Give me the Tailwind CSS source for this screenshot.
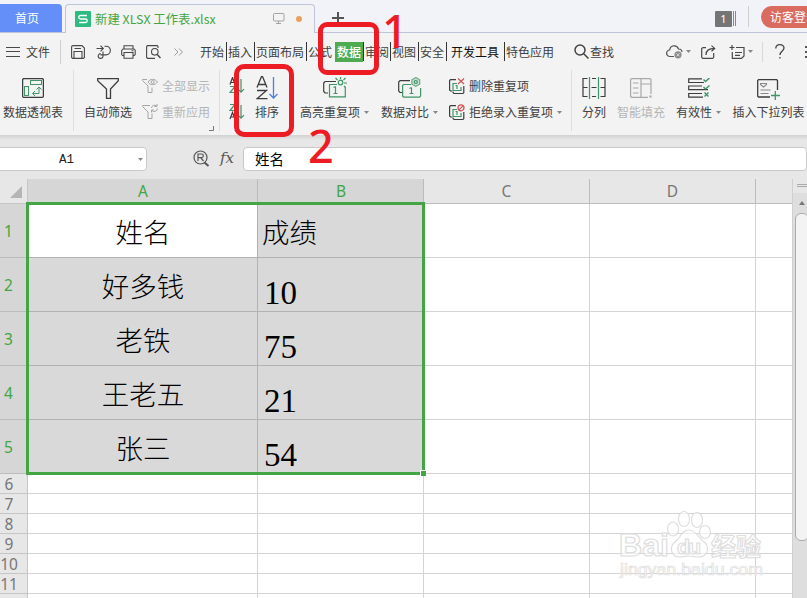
<!DOCTYPE html>
<html lang="zh-CN">
<head>
<meta charset="utf-8">
<title>新建 XLSX 工作表.xlsx</title>
<script src="https://cdn.jsdelivr.net/npm/@tailwindcss/browser@4"></script>
</head>
<body class="w-[807px] h-[598px] overflow-hidden relative bg-[#e7e7e7] text-[12px] leading-[16px] text-[#404040] font-['Noto_Sans_CJK_SC',sans-serif]">

<!-- tab strip -->
<header class="h-[33px] flex items-end bg-[#f1f3f8] border-b border-[#bcc6d8] whitespace-nowrap *:shrink-0">
  <div class="w-[62px] h-[28px] bg-[#648ff9] rounded-tr-[4px] text-white flex items-center pl-[15px] pb-px">首页</div>
  <div class="w-[250px] h-[29px] -mb-px ml-[3px] bg-[#f3f3f3] border border-b-0 border-[#bcc6d8] rounded-t-[4px] flex items-center *:shrink-0">
    <svg class="ml-[9px] w-4 h-4 shrink-0" viewBox="0 0 16 16"><rect width="16" height="16" rx="1" fill="#2dbb7f"/><path d="M12 4.500H5.500a1.700 1.700 0 0 0 0 3.500h5a1.700 1.700 0 0 1 0 3.500H4" fill="none" stroke="#fff" stroke-width="1.300"/></svg>
    <span class="ml-1 w-[125px] text-[#43a543] text-[12.400px]">新建 XLSX 工作表.xlsx</span>
    <svg class="ml-[53px] w-[12px] h-[12px]" viewBox="0 0 12 12" fill="none" stroke="#a3a3a3"><rect x=".5" y=".5" width="10.500" height="7.500" rx="1"/><path d="M5.500 8v2.500M3 10.500h5"/></svg>
    <span class="ml-[11px] w-[6px] h-[6px] rounded-full bg-[#e9a15f]"></span>
  </div>
  <svg class="ml-[17px] mb-[8px] w-[12px] h-[12px]" viewBox="0 0 12 12" stroke="#555" stroke-width="2"><path d="M6 0v12M0 6h12"/></svg>
  <span class="ml-[371px] mb-[5px] w-[17px] h-[16px] rounded-[1px] bg-[#757575] text-white text-[11px] leading-[16px] text-center font-['Noto_Sans',sans-serif]">1</span>
  <span class="ml-px mb-[6px] w-[3px] h-[15px] border-x border-[#888]"></span>
  <span class="ml-[12px] mb-[5px] w-px h-[21px] bg-[#cfcfcf]"></span>
  <span class="ml-[12px] mb-[4px] w-[80px] h-[22px] rounded-full bg-[#d96b5f] text-white pl-[9px] leading-[21px]">访客登录</span>
</header>

<!-- menu bar -->
<nav class="h-[37px] flex items-center bg-[#f3f3f3] whitespace-nowrap *:shrink-0">
  <svg class="ml-[6px] w-[14px] h-[10px]" viewBox="0 0 14 10" stroke="#484848"><path d="M0 .5h14M0 4.500h14M0 9.500h14"/></svg>
  <span class="ml-[6px] w-[24px]">文件</span>
  <span class="ml-[10px] w-px h-6 bg-[#cfcfcf]"></span>
  <svg class="ml-[10px] w-[14px] h-[14px]" viewBox="0 0 14 14" fill="none" stroke="#484848" stroke-width="1.100"><path d="M.6 2V12.400l1 1h10.800l1-1V3L11 .6H2A1.400 1.400 0 0 0 .6 2zM3 13V6.500h8V13M3.500 3.500H10"/></svg>
  <svg class="ml-[11px] w-[15px] h-[14px]" viewBox="0 0 15 14" fill="none" stroke="#484848" stroke-width="1.100"><path d="M.5 3.500h6.800M4.500.7l2.800 2.800L4.500 6.300M8.500 1.200H10a4.300 4.300 0 0 1 0 8.700H4.500M7 6.500V11a2.400 2.400 0 1 1-2.400-2.400"/></svg>
  <svg class="ml-[10px] w-[15px] h-[14px]" viewBox="0 0 15 14" fill="none" stroke="#484848" stroke-width="1.100"><path d="M3 4V.7h9V4M3 10.500H1.500L.7 9.500v-4L2 4h11l1.200 1.200v4.300l-.9 1H12M3 7.500h9v5.800H3zM10.500 5.800h2"/></svg>
  <svg class="ml-[10px] w-[15px] h-[14px]" viewBox="0 0 15 14" fill="none" stroke="#484848" stroke-width="1.100"><path d="M12 3V1.400L11.300.6H1.500L.6 1.500v11l1 .9H9"/><circle cx="8.800" cy="6.800" r="3.300"/><path d="M11.200 9.500l3.300 3.500" stroke-width="1.500"/></svg>
  <svg class="ml-[13px] w-[9px] h-[8px]" viewBox="0 0 9 8" fill="none" stroke="#999"><path d="M.5.5L4 4 .5 7.500M5 .5L8.500 4 5 7.500"/></svg>
  <span class="ml-[17px] w-[27px] leading-[19px] border-r border-[#333]">开始</span>
  <span class="ml-px w-[27px] leading-[19px] border-r border-[#333]">插入</span>
  <span class="ml-px w-[51px] leading-[19px] border-r border-[#333]">页面布局</span>
  <span class="ml-px w-[27px] leading-[19px]">公式</span>
  <span class="w-[28px] leading-[19px] h-[20px] pl-[2px] bg-[#4fab50] text-white font-medium">数据</span>
  <span class="w-[28px] pl-px leading-[19px] border-x border-[#333]">审阅</span>
  <span class="ml-px w-[27px] leading-[19px] border-r border-[#333]">视图</span>
  <span class="ml-px w-[27px] leading-[19px] border-r border-[#333]">安全</span>
  <span class="ml-1 w-[54px] leading-[19px] border-r border-[#333] text-[#111]">开发工具</span>
  <span class="ml-px w-[48px]">特色应用</span>
  <svg class="ml-[20px] w-[15px] h-[15px]" viewBox="0 0 15 15" fill="none" stroke="#444" stroke-width="1.500"><circle cx="6" cy="6" r="5"/><path d="M9.700 9.700l4.800 4.800"/></svg>
  <span class="ml-px w-[24px]">查找</span>
  <svg class="ml-[52px] w-[17px] h-[15px]" viewBox="0 0 17 15" fill="none" stroke="#555" stroke-width="1.200"><path d="M8 12.500H4A3.200 3.200 0 0 1 3.700 6 4.500 4.500 0 0 1 12.500 5a3.300 3.300 0 0 1 3.500 3"/><circle cx="12" cy="10.800" r="3.600" fill="#8b8b8b" stroke="none"/><path d="M10.500 9.300l3 3m0-3l-3 3" stroke="#eee" stroke-width=".8"/></svg>
  <svg class="ml-[3px] w-[5px] h-[3px]" viewBox="0 0 5 3" fill="#888"><path d="M0 0h5L2.500 3z"/></svg>
  <svg class="ml-[10px] w-[15px] h-[14px]" viewBox="0 0 15 14" fill="none" stroke="#484848" stroke-width="1.200"><path d="M5 2.600H2l-1.300 1v8.700l1 1h10l1-1V8M5 10c0-5 3-6.600 8.500-6.600M10.500.6l3.200 2.800-3.200 2.900"/></svg>
  <svg class="ml-[13px] w-[16px] h-[14px]" viewBox="0 0 16 14" fill="none" stroke="#484848" stroke-width="1.200"><path d="M3 0v5M.5 2.500h5M7 2.500h8v8.500l-2.500 2.400H3.300V7M6 7.500h7M6 10.300h5"/></svg>
  <svg class="ml-[3px] w-[5px] h-[3px]" viewBox="0 0 5 3" fill="#888"><path d="M0 0h5L2.500 3z"/></svg>
  <span class="ml-[9px] w-px h-[20px] bg-[#d8d8d8]"></span>
  <svg class="ml-[12px] w-[10px] h-[15px]" viewBox="0 0 10 15" fill="none" stroke="#444" stroke-width="1.300"><path d="M.8 4.500C.8-.5 9-.5 9 4c0 3.200-4.100 3.400-4.100 7M4.900 13v1.600"/></svg>
  <svg class="ml-[20px] w-[3px] h-[12px]" viewBox="0 0 3 12" fill="#555"><path d="M0 0h3v2H0zM0 5h3v2H0zM0 10h3v2H0z"/></svg>
</nav>

<!-- ribbon -->
<section class="h-[65px] flex items-start bg-[#f3f3f3] whitespace-nowrap *:shrink-0">
  <div class="w-[66px] pt-[8px] flex flex-col items-center">
    <svg class="w-[22px] h-[20px]" viewBox="0 0 22 20" fill="none" stroke="#3d3d3d"><rect x=".6" y=".6" width="20.800" height="18.800" rx="1.500" stroke-width="1.300"/><g stroke="#3f9567"><rect x="8.500" y="2.500" width="11" height="4"/><rect x="2.500" y="8.500" width="4" height="9"/><path d="M11 15.500h6v-6M13 13l-2.500 2.500L13 18M14.500 11.500L17 9l2.500 2.500"/></g></svg>
    <span class="mt-[6px]">数据透视表</span>
  </div>
  <span class="ml-[7px] w-px h-[61px] bg-[#dedede]"></span>
  <div class="ml-[6px] w-[56px] pt-[8px] flex flex-col items-center">
    <svg class="w-[22px] h-[21px]" viewBox="0 0 22 21" fill="none" stroke="#3d3d3d" stroke-width="1.300"><path d="M.7.7h20.600v2L13.500 11v9.300h-4V11L.7 2.700z"/></svg>
    <span class="mt-[5px]">自动筛选</span>
  </div>
  <div class="ml-[6px] w-[70px] pt-[7px] text-[#b5b5b5]">
    <div class="h-[18px] flex items-center"><svg class="w-4 h-4" viewBox="0 0 16 16" fill="none" stroke="#a5a5a5"><path d="M5 1.500H.5v1L6 8v6.500h4V9.500"/><path d="M6 4c2-3.500 7-3.500 9.500 0-2.500 3.500-7.500 3.500-9.500 0z"/><circle cx="10.700" cy="4" r="1.500"/></svg><span class="ml-1">全部显示</span></div>
    <div class="mt-[8px] h-[18px] flex items-center"><svg class="w-4 h-4" viewBox="0 0 16 16" fill="none" stroke="#a5a5a5"><path d="M8 1.500H.5v1L6 8v6.500h4V9.500"/><path d="M9.500 4a3 3 0 0 1 5-2M15 0v2.500h-2.500M15.300 4.500a3 3 0 0 1-5.300 2M9.500 8.500V6H12"/></svg><span class="ml-1">重新应用</span></div>
    <svg class="ml-[67px] mt-[5px] w-[5px] h-[5px]" viewBox="0 0 5 5" fill="none" stroke="#777"><path d="M0 4.500h4.500V0"/></svg>
  </div>
  <span class="ml-[7px] w-px h-[61px] bg-[#dedede]"></span>
  <div class="ml-[9px] w-[16px] pt-[7px]">
    <svg class="w-4 h-[17px]" viewBox="0 0 16 17" fill="none" stroke="#3d3d3d" stroke-width="1.200"><path d="M1 7.500L3.500.5 6 7.500M2 5.500h3"/><path stroke="#3f9567" d="M1 9.500h5l-5 6h5M12 2v13M9 12.200l3 3 3-3"/></svg>
    <svg class="mt-[9px] w-4 h-[17px]" viewBox="0 0 16 17" fill="none" stroke="#3d3d3d" stroke-width="1.200"><path d="M1 16L3.500 9.500 6 16M2 14h3"/><path stroke="#3f9567" d="M1 1.500h5l-5 6h5M12 2v13M9 12.200l3 3 3-3"/></svg>
  </div>
  <div class="ml-[7px] w-[30px] pt-[6px] flex flex-col items-center">
    <svg class="w-[22px] h-[24px]" viewBox="0 0 22 24" fill="none" stroke="#3d3d3d" stroke-width="1.300"><path d="M1 11.500L5.500.5h1L11 11.500M2.500 8.500h7M1 14.500h9.500L1 22.700h10.500"/><path stroke="#4f80d8" d="M17.500 1v20.500M13.500 18l4 4 4-4"/></svg>
    <span class="mt-[4px]">排序</span>
  </div>
  <div class="ml-[18px] w-[69px] pt-[7px] flex flex-col items-center">
    <svg class="w-[24px] h-[21px]" viewBox="0 0 24 21" fill="none" stroke="#3f9567" stroke-width="1.200"><path d="M13 4.500H2L.7 6v8.500L2 16h3" stroke="#3d3d3d"/><path d="M14 7.500H6.500v12.300h15.800V10M12.500 9.500v7M10.500 10.500l2-1M10.500 16.500h4"/><circle cx="17.500" cy="5.500" r="2.300"/><path d="M17.500 0v2M12.500 1l2 2M22.500 1l-2 2M21 6h3M21 9l1.500 1.500"/></svg>
    <span class="mt-[6px] flex items-center gap-[4px]">高亮重复项<svg class="w-[5px] h-[3px]" viewBox="0 0 5 3" fill="#888"><path d="M0 0h5L2.500 3z"/></svg></span>
  </div>
  <div class="ml-[12px] w-[57px] pt-[7px] flex flex-col items-center">
    <svg class="w-[24px] h-[21px]" viewBox="0 0 24 21" fill="none" stroke="#3f9567" stroke-width="1.200"><path d="M12 3.600H2L.7 5v9L2 15.500h2" stroke="#3d3d3d"/><path d="M13 7.500H5.500L4.600 8.500V19l1 1.200h16l1-1.200v-8M13.500 10.500v6M11.500 11.500l2-1M11.500 16.500h4"/><path d="M17.800.6l3.900 2.200v4.400l-3.900 2.200-3.900-2.200V2.800z" fill="#c5dccf" stroke="#6aab87"/><circle cx="17.800" cy="5" r="1.500"/></svg>
    <span class="mt-[6px] flex items-center gap-[4px]">数据对比<svg class="w-[5px] h-[3px]" viewBox="0 0 5 3" fill="#888"><path d="M0 0h5L2.500 3z"/></svg></span>
  </div>
  <div class="ml-[10px] w-[115px] pt-[7px]">
    <div class="h-[18px] flex items-center"><svg class="w-[17px] h-[17px]" viewBox="0 0 17 17" fill="none" stroke="#3d3d3d" stroke-width="1.200"><path d="M8 1.600H2.500L1.600 2.500v9.500l1 1H4M5 13.500v1l1 1h9l.8-1V8"/><path stroke="#3f9567" d="M9 5.500H5v7h8V9M9 7v4M7.500 7.500H9"/><path stroke="#cf5353" d="M10 .5l6 5.500M16 .5L10 6"/></svg><span class="ml-1">删除重复项</span></div>
    <div class="mt-[8px] h-[18px] flex items-center"><svg class="w-[17px] h-[17px]" viewBox="0 0 17 17" fill="none" stroke="#3d3d3d" stroke-width="1.200"><path d="M8 1.600H2.500L1.600 2.500v9.500l1 1H4M5 13.500v1l1 1h9l.8-1V8"/><path stroke="#3f9567" d="M9 5.500H5v7h8V9M9 7v4M7.500 7.500H9"/><g stroke="#cf5353"><circle cx="13" cy="3.800" r="3"/><path d="M15 1.800l-4 4"/></g></svg><span class="ml-1">拒绝录入重复项</span><svg class="ml-1 w-[5px] h-[3px]" viewBox="0 0 5 3" fill="#888"><path d="M0 0h5L2.500 3z"/></svg></div>
  </div>
  <span class="ml-[8px] w-px h-[61px] bg-[#dedede]"></span>
  <div class="ml-[7px] w-[30px] pt-[7px] flex flex-col items-center">
    <svg class="w-[24px] h-[22px]" viewBox="0 0 24 22" fill="none" stroke="#3d3d3d" stroke-width="1.200"><path d="M5.500 1.500H1v18h4.500M18.500 1.500H23v18h-4.500M10 1.500h4M10 19.500h4M1 10.500h4.500M9.500 10.500h5M18.500 10.500H23"/><path stroke="#3f9567" d="M7.500 0v22M16.500 0v22"/></svg>
    <span class="mt-[5px]">分列</span>
  </div>
  <div class="ml-[5px] w-[54px] pt-[8px] flex flex-col items-center">
    <svg class="w-[22px] h-[20px]" viewBox="0 0 22 20" fill="none" stroke="#a8a8a8" stroke-width="1.200"><path d="M21 16V1.500L20 .6H1.600L.6 1.500v17l1 .8H18M11 1v18M11 6h10M3 5h5.500M3 10h5.500M3 15h5.500M20 18h1v1h-1z"/></svg>
    <span class="mt-[6px] text-[#b5b5b5]">智能填充</span>
  </div>
  <div class="ml-[8px] w-[45px] pt-[8px] flex flex-col items-center">
    <svg class="w-[22px] h-[20px]" viewBox="0 0 22 20" fill="none" stroke="#3d3d3d" stroke-width="1.200"><path d="M14 .8H.7v3.700H16M14 8H.7v3.700H20M14 15.500H.7v3.700H15"/><path stroke="#3f9567" stroke-width="1.400" d="M15.500 1.500l2 2L21.500 0M15.500 9l2 2 4-3.500M16.500 14.500l4 4M20.500 14.500l-4 4"/></svg>
    <span class="mt-[6px] flex items-center gap-[4px]">有效性<svg class="w-[5px] h-[3px]" viewBox="0 0 5 3" fill="#888"><path d="M0 0h5L2.500 3z"/></svg></span>
  </div>
  <div class="ml-[11px] w-[73px] pt-[9px] flex flex-col items-center">
    <svg class="w-[23px] h-[21px]" viewBox="0 0 23 21" fill="none" stroke="#3d3d3d" stroke-width="1.300"><path d="M20.500 11V1.500L19.700.7H1.500L.7 1.500v15.800l.8.7H13"/><g stroke="#888" stroke-width="1.100"><path d="M3.500 4.500h6v1L6.500 8l-3-2.500zM3.500 11h10M3.500 14.500h8"/></g><path stroke="#3f9567" d="M18.300 12v9M14 16.500h9"/></svg>
    <span class="mt-[4px]">插入下拉列表</span>
  </div>
</section>

<!-- formula bar -->
<section class="h-[44px] flex items-start pt-[12px] bg-[#e7e7e7] bg-linear-to-b from-[#d2d2d2] from-0% to-[#e7e7e7] to-[5px] whitespace-nowrap *:shrink-0">
  <div class="-ml-[4px] w-[151px] h-[24px] bg-white border border-[#c9c9c9] rounded-[4px] flex items-center">
    <span class="ml-[62px] mt-[2px] w-[16px] text-[12.500px] font-['Liberation_Mono',monospace] text-[#222]">A1</span>
    <svg class="ml-[63px] w-[5px] h-[3px]" viewBox="0 0 5 3" fill="#888"><path d="M0 0h5L2.500 3z"/></svg>
  </div>
  <svg class="ml-[46px] mt-[3px] w-[17px] h-[17px]" viewBox="0 0 17 17" fill="none" stroke="#555" stroke-width="1.200"><circle cx="7.500" cy="7.500" r="6.500"/><path d="M5 11V4h3.500a1.800 1.800 0 0 1 0 3.700H5M8 8l2.500 3"/><path d="M11.500 12.500l4 3.500" stroke-width="2"/></svg>
  <span class="ml-[10px] mt-px w-[20px] text-[15px] leading-[20px] italic text-[#555] font-['DejaVu_Serif',serif]">fx</span>
  <div class="ml-[3px] w-[564px] h-[24px] bg-white border border-[#c9c9c9] rounded-[4px] pl-[11px] text-[14.500px] leading-[22px] text-black">姓名</div>
</section>

<!-- sheet and scrollbar -->
<main class="flex h-[419px] overflow-hidden">
  <div id="sheet" class="w-[792px] shrink-0 grid grid-cols-[28px_230px_166px_166px_166px_36px] auto-rows-min content-start bg-white font-['Noto_Sans',sans-serif] text-[15.500px]"></div>
  <aside class="w-[15px] flex flex-col bg-[#dedede] border-l border-[#d0d0d0]">
    <div class="h-[14px] bg-[#e7e7e7] pt-[5px] pl-[4px]"><div class="h-[3px] border-y border-[#aaa]"></div></div>
    <div class="h-[20px] flex items-center justify-center pl-[3px]"><svg class="w-[6px] h-[4px]" viewBox="0 0 6 4" fill="#777"><path d="M0 4h6L3 0z"/></svg></div>
    <div class="ml-[2px] w-[14px] h-[328px] bg-[#f3f3f3] border border-[#aaa] rounded-[6px]"></div>
  </aside>
</main>

<script>
const sheet = document.getElementById('sheet');
const add = (cls, html) => { const d = document.createElement('div'); d.className = cls; d.innerHTML = html || ''; sheet.append(d); };
add('h-[25px] bg-[#e7e7e7] border-r border-b border-[#c6c6c6] flex items-end justify-end pr-[5px] pb-[5px]',
  '<svg class="w-[12px] h-[12px]" viewBox="0 0 12 12" fill="#b5b5b5"><path d="M12 0v12H0z"/></svg>');
['A', 'B', 'C', 'D', ''].forEach((c, i) => add(i < 2
  ? 'h-[25px] bg-[#d6d6d6] border-r border-b border-[#bcbcbc] text-[#43a543] text-center leading-[25px] pl-px'
  : i < 4 ? 'h-[25px] bg-[#e7e7e7] border-r border-b border-[#bcbcbc] text-[#777] text-center leading-[25px]'
  : 'h-[25px] bg-[#e7e7e7] border-b border-[#bcbcbc]', c));
[['姓名', '成绩'], ['好多钱', '10'], ['老铁', '75'], ['王老五', '21'], ['张三', '54']].forEach(([a, b], i) => {
  add('h-[54px] bg-[#d6d6d6] border-r border-b border-[#bcbcbc] text-[#43a543] text-[15.500px] leading-[54px] pl-[4px]', i + 1);
  add(i ? "h-[54px] bg-[#d9d9d9] border-r border-b border-[#b2b2b2] text-black text-center text-[27.500px] leading-[54px] pl-px font-light font-['Noto_Sans_CJK_SC',sans-serif]"
        : "h-[54px] bg-white border-r border-b border-[#b2b2b2] text-black text-center text-[27.500px] leading-[54px] pl-px font-light font-['Noto_Sans_CJK_SC',sans-serif]", a);
  add(i ? "h-[54px] bg-[#d9d9d9] border-r border-b border-[#b2b2b2] text-black text-[33px] leading-[70px] pl-[6px] font-['Liberation_Serif',serif]"
        : "h-[54px] bg-[#d9d9d9] border-r border-b border-[#b2b2b2] text-black text-[27.500px] leading-[54px] pl-[4px] font-light font-['Noto_Sans_CJK_SC',sans-serif]", b);
  for (let k = 0; k < 3; k++) add(k < 2 ? 'h-[54px] border-r border-b border-[#d4d4d4]' : 'h-[54px] border-b border-[#d4d4d4]');
});
for (let r = 6; r <= 12; r++) {
  add('h-[20px] bg-[#e7e7e7] border-r border-b border-[#c6c6c6] text-[#777] text-[15.500px] leading-[20px] pr-[9px] whitespace-nowrap flex justify-center', r < 12 ? r : '');
  for (let k = 0; k < 5; k++) add(k < 4 ? 'h-[20px] border-r border-b border-[#d4d4d4]' : 'h-[20px] border-b border-[#d4d4d4]');
}
</script>

<!-- selection frame and fill handle -->
<div class="absolute left-[26px] top-[202px] w-[399px] h-[273px] border-3 border-[#43a543]"></div>
<div class="absolute left-[420px] top-[470px] w-[6px] h-[6px] bg-[#43a543] border-l border-t border-white"></div>

<!-- watermark -->
<svg class="absolute left-[610px] top-[505px] w-[165px] h-[80px]" viewBox="0 0 165 80" fill="#ffffff" fill-opacity=".6" stroke="#dedede" stroke-width="1.200">
  <ellipse cx="63" cy="24" rx="5.500" ry="7"/><ellipse cx="74" cy="14" rx="5.500" ry="7.500"/><ellipse cx="87" cy="15" rx="5.500" ry="7.500"/><ellipse cx="95" cy="27" rx="5.500" ry="6.500"/>
  <path d="M79 25c7 0 9 7 14 11 7 5 6 16-5 16-5 0-6-1-9-1s-5 1-9 1c-10 0-11-11-4-16 5-4 6-11 13-11z"/>
  <g font-weight="700" font-family="Liberation Sans, sans-serif"><text x="9" y="51" font-size="31" textLength="50" lengthAdjust="spacingAndGlyphs">Bai</text><text x="67" y="49" font-size="21" textLength="24">du</text>
  <text x="101" y="51" font-size="25" font-family="Noto Sans CJK SC, sans-serif" textLength="50">经验</text>
  <text x="10" y="70" font-size="16" font-weight="400" stroke-width=".7" textLength="143" lengthAdjust="spacingAndGlyphs">jingyan.baidu.com</text></g>
</svg>

<!-- step markers -->
<div class="absolute left-[318px] top-[22px] w-[61px] h-[53px] border-5 border-[#ed1c24] rounded-[9px]"></div>
<div class="absolute left-[234px] top-[64px] w-[60px] h-[73px] border-5 border-[#ed1c24] rounded-[10px]"></div>
<div class="absolute left-[382px] top-[7px] text-[45px] leading-[48px] text-[#ed1c24] font-medium font-['Noto_Sans',sans-serif]">1</div>
<div class="absolute left-[308px] top-[122px] text-[45px] leading-[48px] text-[#ed1c24] font-medium font-['Noto_Sans',sans-serif]">2</div>
</body>
</html>
